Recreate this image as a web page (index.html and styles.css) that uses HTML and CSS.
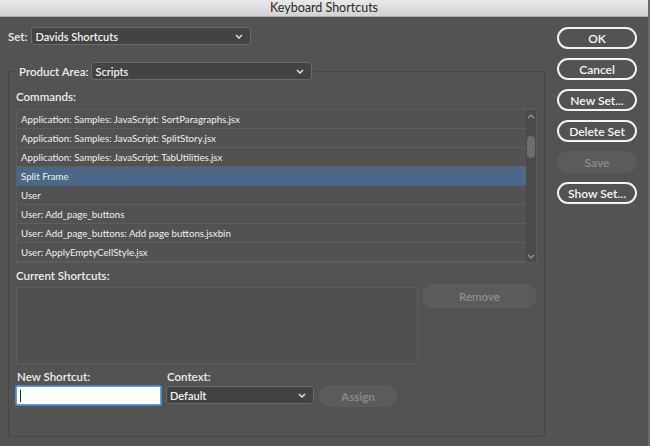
FILE: index.html
```html
<!DOCTYPE html>
<html>
<head>
<meta charset="utf-8">
<link rel="stylesheet" href="styles.css">
</head>
<body>
<div class="window">
  <div class="titlebar">Keyboard Shortcuts</div>
  <div class="dialog">
    <div class="main">
      <div class="set-row">
        <span class="label">Set:</span>
        <div class="select select-set"><span>Davids Shortcuts</span><svg class="chev" width="8" height="5" viewBox="0 0 8 5"><polyline points="1,1 4,4 7,1" fill="none" stroke="#e6e6e6" stroke-width="1.4"/></svg></div>
      </div>
      <fieldset class="group">
        <legend class="legend">
          <span class="label">Product Area:</span>
          <div class="select select-area"><span>Scripts</span><svg class="chev" width="8" height="5" viewBox="0 0 8 5"><polyline points="1,1 4,4 7,1" fill="none" stroke="#e6e6e6" stroke-width="1.4"/></svg></div>
        </legend>
        <div class="label sec-label">Commands:</div>
        <div class="list">
          <div class="rows">
            <div class="row">Application: Samples: JavaScript: SortParagraphs.jsx</div>
            <div class="row">Application: Samples: JavaScript: SplitStory.jsx</div>
            <div class="row">Application: Samples: JavaScript: TabUtilities.jsx</div>
            <div class="row selected">Split Frame</div>
            <div class="row">User</div>
            <div class="row">User: Add_page_buttons</div>
            <div class="row">User: Add_page_buttons: Add page buttons.jsxbin</div>
            <div class="row">User: ApplyEmptyCellStyle.jsx</div>
          </div>
          <div class="scrollbar">
            <svg width="8" height="5" viewBox="0 0 8 5"><polyline points="1,4 4,1 7,4" fill="none" stroke="#9a9a9a" stroke-width="1.2"/></svg>
            <div class="thumb-wrap"><div class="thumb"></div></div>
            <svg width="8" height="5" viewBox="0 0 8 5"><polyline points="1,1 4,4 7,1" fill="none" stroke="#9a9a9a" stroke-width="1.2"/></svg>
          </div>
        </div>
        <div class="label sec-label cur-label">Current Shortcuts:</div>
        <div class="current-row">
          <div class="current-box"></div>
          <div class="pill disabled remove">Remove</div>
        </div>
        <div class="new-row">
          <div class="field field-new">
            <div class="label">New Shortcut:</div>
            <div class="input"><span class="caret"></span></div>
          </div>
          <div class="field field-ctx">
            <div class="label">Context:</div>
            <div class="select select-ctx"><span>Default</span><svg class="chev" width="8" height="5" viewBox="0 0 8 5"><polyline points="1,1 4,4 7,1" fill="none" stroke="#e6e6e6" stroke-width="1.4"/></svg></div>
          </div>
          <div class="pill disabled assign">Assign</div>
        </div>
      </fieldset>
    </div>
    <div class="buttons">
      <div class="pill btn">OK</div>
      <div class="pill btn">Cancel</div>
      <div class="pill btn">New Set...</div>
      <div class="pill btn">Delete Set</div>
      <div class="pill btn disabled">Save</div>
      <div class="pill btn">Show Set...</div>
    </div>
  </div>
</div>
</body>
</html>
```
FILE: styles.css
```css
* { box-sizing: border-box; }
html, body { margin: 0; padding: 0; }
body {
  width: 650px;
  height: 446px;
  overflow: hidden;
  background: #535353;
  font-family: "Lato", "Liberation Sans", sans-serif;
  color: #eeeeee;
}
.window {
  width: 650px;
  height: 446px;
  background: #535353;
  border-right: 2px solid #6a6a6a;
}
.titlebar {
  height: 17px;
  background: linear-gradient(#e9e9e9, #d2d2d2);
  border-bottom: 1px solid #a8a8a8;
  color: #2a2a2a;
  font-size: 12.5px;
  line-height: 16px;
  text-align: center;
}
.dialog {
  display: flex;
  padding-left: 8px;
}
.main {
  width: 537px;
}
.label {
  font-size: 11.5px;
  color: #ececec;
  font-weight: 600;
}
.set-row {
  display: flex;
  align-items: center;
  gap: 4px;
  margin-top: 10px;
  height: 18px;
}
.select {
  display: flex;
  align-items: center;
  justify-content: space-between;
  height: 18px;
  background: #434343;
  border: 1px solid #6a6a6a;
  border-radius: 3px;
  padding: 0 7px 0 3px;
  font-size: 11px;
  font-weight: 600;
  color: #f0f0f0;
}
.select-set { width: 220px; }
.select-area { width: 221px; }
.select-ctx { width: 148px; }
.group {
  margin: 17px 0 0 0;
  padding: 0 6px 0 7px;
  height: 375px;
  border: 1px solid #474747;
  border-radius: 2px;
}
.legend {
  display: flex;
  align-items: center;
  gap: 3px;
  padding: 0 2px 0 3px;
  margin-left: 0;
}
.sec-label {
  margin-top: 10px;
  height: 14px;
  line-height: 14px;
}
.list {
  display: flex;
  margin-top: 5px;
  width: 521px;
  height: 154px;
  border: 1px solid #5d5d5d;
  background: #525252;
}
.rows {
  flex: 1;
}
.row {
  height: 19px;
  line-height: 18px;
  border-bottom: 1px solid #5e5e5e;
  padding-left: 4px;
  font-size: 9.7px;
  color: #f0f0f0;
  white-space: nowrap;
}
.row.selected {
  background: #4c6888;
  border-bottom-color: #4a5f76;
}
.scrollbar {
  width: 10px;
  background: #4a4a4a;
  display: flex;
  flex-direction: column;
  align-items: center;
  padding: 4px 0 3px;
}
.thumb-wrap {
  flex: 1;
  width: 100%;
  padding-top: 17px;
  display: flex;
  justify-content: center;
}
.thumb {
  width: 8px;
  height: 22px;
  border-radius: 4px;
  background: #6d6d6d;
}
.cur-label {
  margin-top: 6px;
}
.current-row {
  display: flex;
  align-items: flex-start;
  gap: 4px;
  margin-top: 1px;
}
.current-box {
  margin-top: 3px;
  width: 402px;
  height: 77px;
  border: 1px solid #5e5e5e;
  background: #505050;
}
.pill {
  display: flex;
  align-items: center;
  justify-content: center;
  border-radius: 12px;
  font-size: 11.5px;
  font-weight: 600;
}
.pill.disabled {
  background: #5b5b5b;
  color: #8d8d8d;
}
.remove {
  width: 115px;
  height: 24px;
}
.new-row {
  display: flex;
  align-items: flex-start;
  margin-top: 6px;
}
.field .label {
  height: 14px;
  line-height: 14px;
  margin-bottom: 2px;
  padding-left: 1px;
}
.field-new { width: 150px; }
.field-ctx { width: 153px; }
.input {
  width: 145px;
  height: 19px;
  background: #ffffff;
  border: 1px solid #5b9fdd;
  box-shadow: 0 0 0 1px #4a86c4;
  border-radius: 1px;
  padding: 3px 0 0 3px;
}
.caret {
  display: block;
  width: 1px;
  height: 12px;
  background: #222;
}
.assign {
  width: 78px;
  height: 22px;
  margin-top: 15px;
}
.buttons {
  display: flex;
  flex-direction: column;
  gap: 9px;
  margin-left: 12px;
  padding-top: 10px;
}
.btn {
  width: 80px;
  height: 22px;
  border: 2px solid #f2f2f2;
  color: #f6f6f6;
  background: #535353;
  font-size: 12px;
}
.btn.disabled {
  border: none;
  background: #5b5b5b;
  color: #8d8d8d;
}
```
